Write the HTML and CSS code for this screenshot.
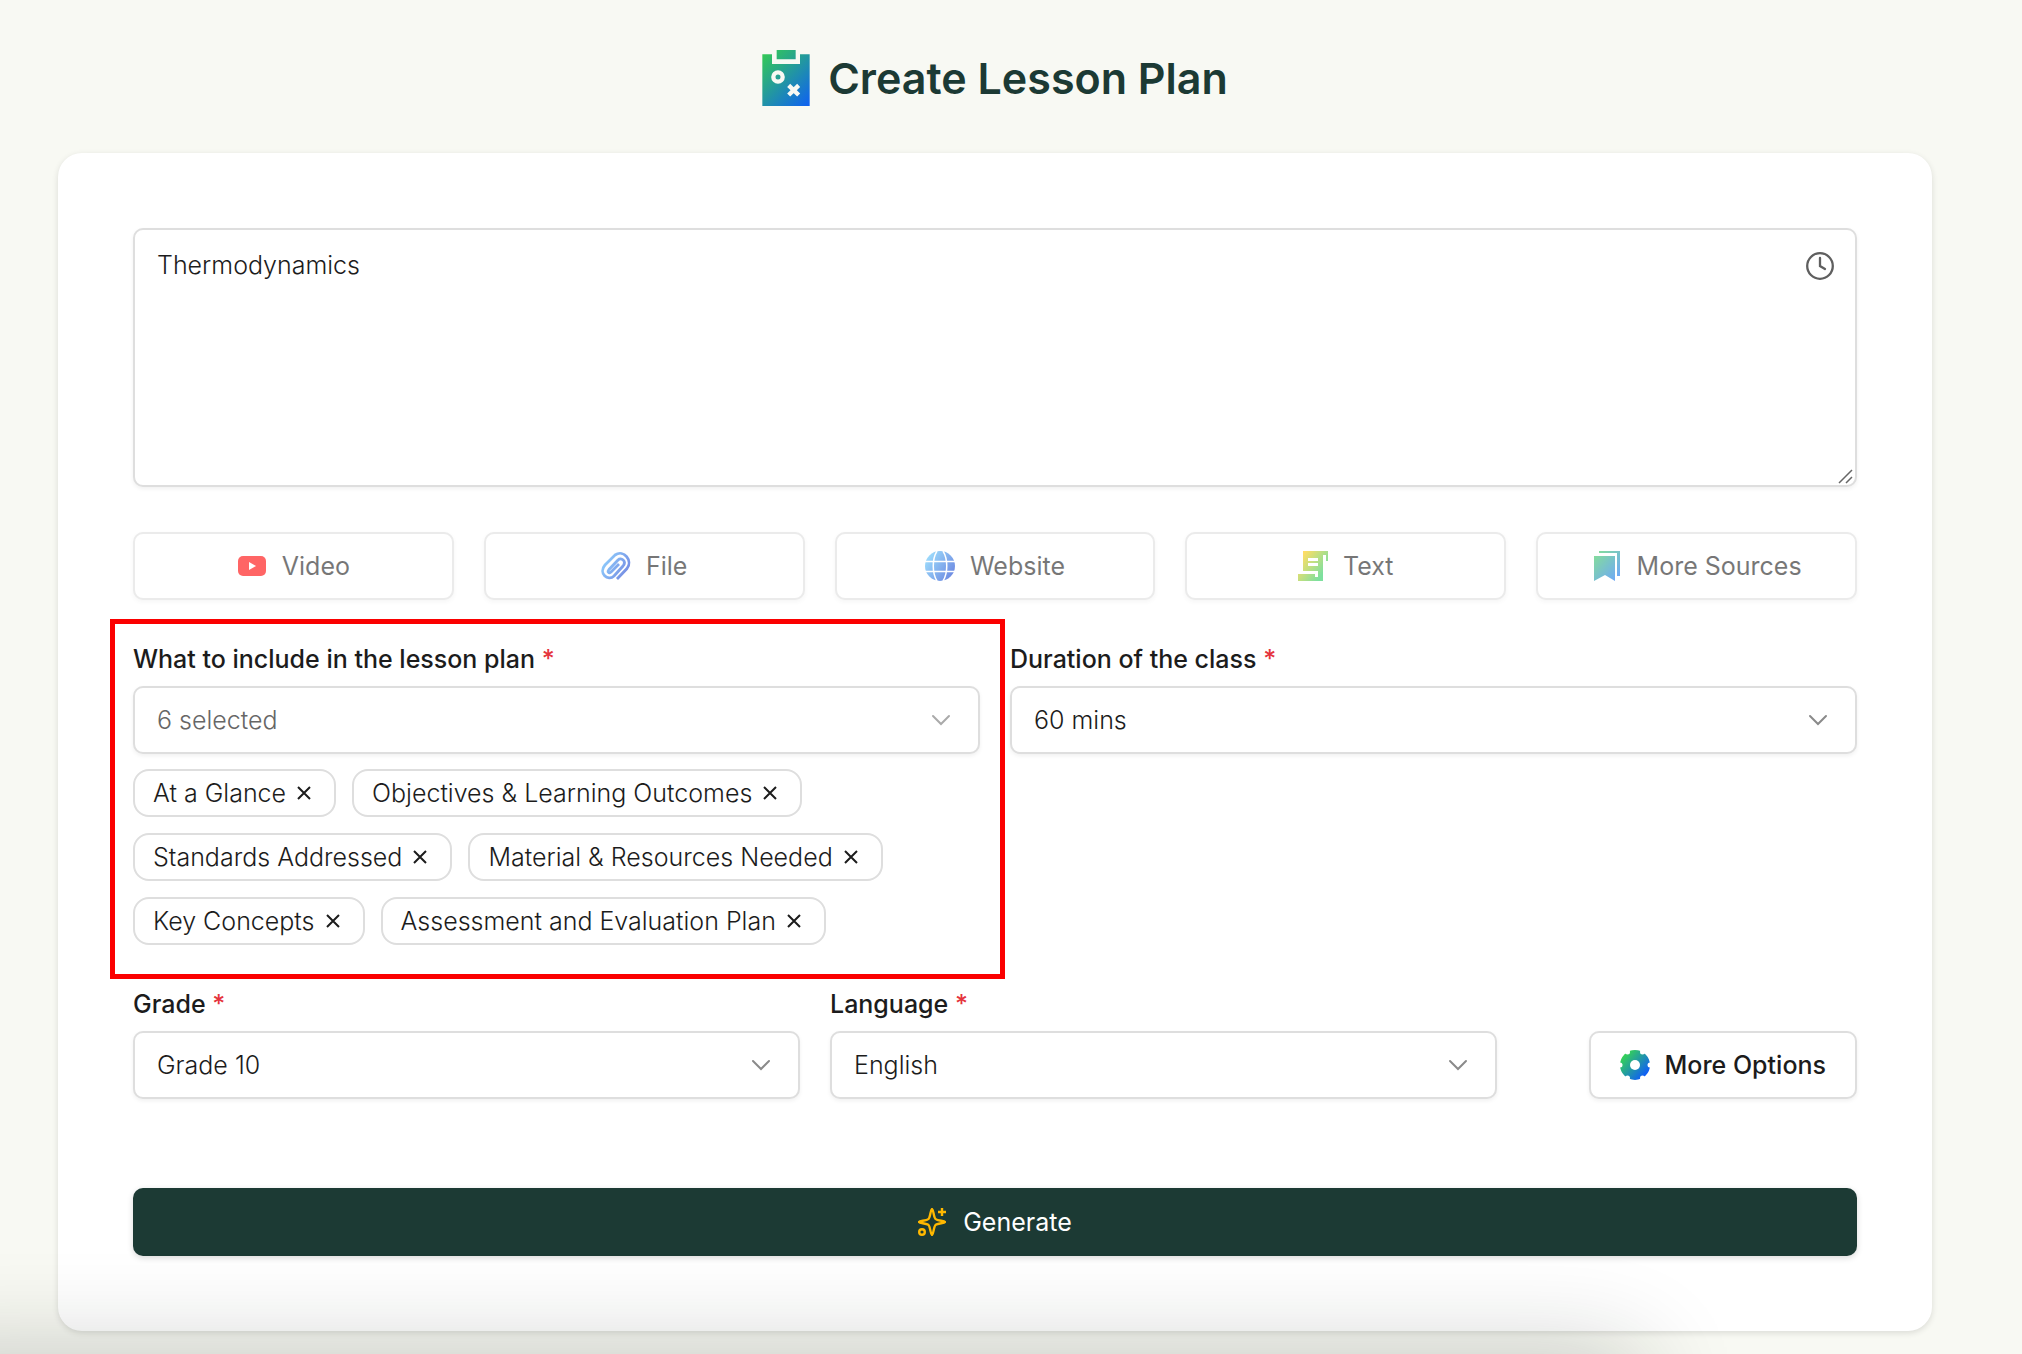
FILE: index.html
```
<!DOCTYPE html>
<html lang="en">
<head>
    <meta charset="UTF-8">
    <meta name="viewport" content="width=device-width, initial-scale=1.0">
    <title>Create Lesson Plan</title>
    <link rel="stylesheet" href="styles.css">
</head>
<body>
    <main class="page">
        <!-- Title -->
        <header class="page-header">
            <svg class="title-icon" viewBox="73 60 142 168" aria-hidden="true">
                <defs>
                    <linearGradient id="gradTitle" x1="73" y1="80" x2="215" y2="222" gradientUnits="userSpaceOnUse">
                        <stop offset="0" stop-color="#34c759"/>
                        <stop offset="1" stop-color="#0f62f0"/>
                    </linearGradient>
                </defs>
                <path fill="url(#gradTitle)" d="M73 73h29v29h84V73h29v155H73zM116 60h57v28h-57z"/>
                <circle cx="120" cy="141" r="14" fill="none" stroke="#f8f9f3" stroke-width="13"/>
                <path d="M152 166l30 29M182 166l-30 29" stroke="#f8f9f3" stroke-width="13"/>
            </svg>
            <h1>Create Lesson Plan</h1>
        </header>

        <form class="card">
            <!-- Topic -->
            <div class="topic">
                <textarea class="topic-input" aria-label="Topic">Thermodynamics</textarea>
                <button type="button" class="history-btn" aria-label="History">
                    <svg viewBox="0 0 28 28" fill="none" stroke="currentColor" stroke-width="2.300" stroke-linecap="round">
                        <circle cx="14" cy="14" r="12.800"/>
                        <path d="M14 6v8l5 3"/>
                    </svg>
                </button>
                <svg class="resize-grip" viewBox="0 0 16 16" aria-hidden="true">
                    <path d="M1 15L14 2M8 15l6-6" stroke="#666" stroke-width="1.500"/>
                </svg>
            </div>

            <!-- Sources -->
            <div class="sources">
                <button type="button" class="btn source-btn">
                    <svg viewBox="0 0 30 30" aria-hidden="true">
                        <rect x="1" y="5" width="28" height="20" rx="5" fill="#ff0000"/>
                        <path d="M12 11v8l7-4z" fill="#fff"/>
                    </svg>
                    Video
                </button>
                <button type="button" class="btn source-btn">
                    <svg viewBox="0 0 30 30" aria-hidden="true">
                        <defs>
                            <linearGradient id="gradFile" x1="0" y1="8" x2="26" y2="24" gradientUnits="userSpaceOnUse">
                                <stop offset="0" stop-color="#47b5ff"/>
                                <stop offset="1" stop-color="#1a3fd0"/>
                            </linearGradient>
                        </defs>
                        <path d="M16 28L26 17.500C32 10 23-2 14 4L4 14C-3 22 7 31 13 25L22 15C26 10 20 6 17 9L8 18.500C6 21 8 23 10 21L18 13" fill="none" stroke="url(#gradFile)" stroke-width="2.800"/>
                    </svg>
                    File
                </button>
                <button type="button" class="btn source-btn">
                    <svg viewBox="0 0 30 30" aria-hidden="true">
                        <defs>
                            <linearGradient id="gradWeb" x1="2" y1="6" x2="28" y2="24" gradientUnits="userSpaceOnUse">
                                <stop offset="0" stop-color="#5cc4fa"/>
                                <stop offset="1" stop-color="#0f3fd0"/>
                            </linearGradient>
                        </defs>
                        <circle cx="15" cy="15" r="15" fill="url(#gradWeb)"/>
                        <path d="M0 10.500h30M0 20.500h30M12 0C7 8 7 22 12 30M18 0c5 8 5 22 0 30" fill="none" stroke="#fff" stroke-width="1.500"/>
                    </svg>
                    Website
                </button>
                <button type="button" class="btn source-btn">
                    <svg viewBox="0 0 30 30" aria-hidden="true">
                        <defs>
                            <linearGradient id="gradText" x1="3" y1="6" x2="25" y2="22" gradientUnits="userSpaceOnUse">
                                <stop offset="0" stop-color="#ffc800"/>
                                <stop offset="1" stop-color="#28cc5f"/>
                            </linearGradient>
                        </defs>
                        <path fill="url(#gradText)" d="M5 0h25v10h-2V4h-3v26H0v-7h17v3h3v-6H5zM10 7v3h10V7zM10 12v3h10v-3z" fill-rule="evenodd"/>
                    </svg>
                    Text
                </button>
                <button type="button" class="btn source-btn">
                    <svg viewBox="0 0 30 30" aria-hidden="true">
                        <defs>
                            <linearGradient id="gradMore" x1="2" y1="4" x2="26" y2="26" gradientUnits="userSpaceOnUse">
                                <stop offset="0" stop-color="#34c759"/>
                                <stop offset="1" stop-color="#0f72f0"/>
                            </linearGradient>
                        </defs>
                        <path fill="url(#gradMore)" d="M2 5h21v25l-10-6-11 6zM7 0h21v25h-3V2H7z"/>
                    </svg>
                    More Sources
                </button>
            </div>

            <!-- Sections and duration -->
            <div class="row row-half">
                <div class="field field-marked">
                    <label for="sections">What to include in the lesson plan <span class="required">*</span></label>
                    <div class="select-wrap">
                        <select id="sections" class="select select-muted">
                            <option>6 selected</option>
                        </select>
                        <svg class="chevron chevron-muted" viewBox="0 0 20 12"><path d="M2 2l8 8 8-8"/></svg>
                    </div>
                    <div class="chips" id="chips"></div>
                </div>
                <div class="field">
                    <label for="duration">Duration of the class <span class="required">*</span></label>
                    <div class="select-wrap">
                        <select id="duration" class="select">
                            <option>60 mins</option>
                        </select>
                        <svg class="chevron" viewBox="0 0 20 12"><path d="M2 2l8 8 8-8"/></svg>
                    </div>
                </div>
            </div>

            <!-- Grade, language, options -->
            <div class="row row-options">
                <div class="field">
                    <label for="grade">Grade <span class="required">*</span></label>
                    <div class="select-wrap">
                        <select id="grade" class="select">
                            <option>Grade 10</option>
                        </select>
                        <svg class="chevron" viewBox="0 0 20 12"><path d="M2 2l8 8 8-8"/></svg>
                    </div>
                </div>
                <div class="field">
                    <label for="language">Language <span class="required">*</span></label>
                    <div class="select-wrap">
                        <select id="language" class="select">
                            <option>English</option>
                        </select>
                        <svg class="chevron" viewBox="0 0 20 12"><path d="M2 2l8 8 8-8"/></svg>
                    </div>
                </div>
                <button type="button" class="btn options-btn">
                    <svg viewBox="0 0 30 30" aria-hidden="true">
                        <defs>
                            <linearGradient id="gradGear" x1="4" y1="6" x2="25" y2="25" gradientUnits="userSpaceOnUse">
                                <stop offset="0" stop-color="#34d058"/>
                                <stop offset="1" stop-color="#0f5ff5"/>
                            </linearGradient>
                        </defs>
                        <circle cx="15" cy="15" r="15" fill="url(#gradGear)"/>
                        <g fill="#fff">
                            <circle cx="15" cy="15" r="5"/>
                            <circle cx="30" cy="15" r="2.500"/>
                            <circle cx="22.500" cy="2" r="2.500"/>
                            <circle cx="7.500" cy="2" r="2.500"/>
                            <circle cx="0" cy="15" r="2.500"/>
                            <circle cx="7.500" cy="28" r="2.500"/>
                            <circle cx="22.500" cy="28" r="2.500"/>
                        </g>
                    </svg>
                    More Options
                </button>
            </div>

            <button type="button" class="generate-btn">
                <svg viewBox="0 0 28 28" fill="none" stroke="#ffb800" stroke-width="2.400" stroke-linejoin="round" aria-hidden="true">
                    <path d="M14 1C15.500 1 15.500 9 17.500 11S27 12.500 27 14 19.500 15 17.500 17 15.500 27 14 27 12.500 19 10.500 17 1 15.500 1 14 8.500 13 10.500 11 12.500 1 14 1z"/>
                    <path d="M24 0v8M20 4h8"/>
                    <circle cx="4" cy="24" r="2.800"/>
                </svg>
                Generate
            </button>
        </form>
    </main>
    <div class="bottom-shade"></div>

    <script>
        const sections = [
            "At a Glance",
            "Objectives & Learning Outcomes",
            "Standards Addressed",
            "Material & Resources Needed",
            "Key Concepts",
            "Assessment and Evaluation Plan"
        ];

        // Build the list of selected sections
        const chips = document.getElementById('chips');
        sections.forEach(name => {
            const chip = document.createElement('span');
            chip.className = 'chip';
            chip.textContent = name;

            const remove = document.createElement('button');
            remove.type = 'button';
            remove.className = 'chip-remove';
            remove.setAttribute('aria-label', 'Remove ' + name);
            remove.innerHTML = '<svg viewBox="0 0 28 28"><path d="M8 8l12 12M20 8L8 20"/></svg>';
            remove.onclick = () => chip.remove();

            chip.appendChild(remove);
            chips.appendChild(chip);
        });
    </script>
</body>
</html>
```
FILE: styles.css
```
* {
    margin: 0;
    padding: 0;
    box-sizing: border-box;
}

body {
    background: #f8f9f3;
    color: #1c1c1c;
    font-family: Inter, "Liberation Sans", sans-serif;
    font-size: 25px;
    line-height: 36px;
}

button,
select,
textarea {
    font: inherit;
    color: inherit;
}

button {
    cursor: pointer;
}

.page {
    padding: 44px 90px 22px 58px;
}

/* Title */
.page-header {
    display: flex;
    justify-content: center;
    align-items: center;
    gap: 18px;
    margin-bottom: 41px;
}

.title-icon {
    width: 48px;
    height: 56px;
}

h1 {
    color: #1c3a34;
    font-size: 43px;
    font-weight: 600;
    line-height: 68px;
}

/* Card */
.card {
    display: flex;
    flex-direction: column;
    padding: 75px;
    background: #fff;
    border-radius: 24px;
    box-shadow: 0 2px 6px rgba(0, 0, 0, 0.12);
}

/* Topic */
.topic {
    position: relative;
    display: flex;
    margin-bottom: 45px;
}

.topic-input {
    width: 100%;
    height: 259px;
    padding: 17px 80px 17px 22px;
    font-weight: 300;
    background: #fff;
    border: 2px solid #dedede;
    border-radius: 10px;
    box-shadow: 0 2px 4px rgba(0, 0, 0, 0.06);
    outline: none;
}

.topic-input::-webkit-resizer {
    display: none;
}

.history-btn {
    position: absolute;
    top: 24px;
    right: 23px;
    width: 28px;
    height: 28px;
    color: #5f5f5f;
    background: none;
    border: none;
}

.history-btn svg {
    display: block;
}

.resize-grip {
    position: absolute;
    right: 3px;
    bottom: 3px;
    width: 16px;
    height: 16px;
    pointer-events: none;
}

/* Buttons */
.btn {
    display: flex;
    justify-content: center;
    align-items: center;
    gap: 15px;
    height: 68px;
    background: #fff;
    border: 2px solid #dedede;
    border-radius: 10px;
    box-shadow: 0 2px 4px rgba(0, 0, 0, 0.06);
}

.btn svg {
    width: 30px;
    height: 30px;
}

.sources {
    display: grid;
    grid-template-columns: repeat(5, 1fr);
    gap: 30px;
    margin-bottom: 41px;
}

.source-btn {
    opacity: 0.6;
}

.options-btn {
    align-self: end;
    justify-self: end;
    padding: 0 29px;
    font-weight: 500;
}

/* Fields */
.row {
    display: grid;
    gap: 30px;
}

.row-half {
    grid-template-columns: repeat(2, 1fr);
    margin-bottom: 41px;
}

.row-options {
    grid-template-columns: 1fr 1fr 330px;
    margin-bottom: 89px;
}

.field label {
    display: block;
    margin-bottom: 9px;
    font-weight: 500;
}

.required {
    color: #e5343d;
}

/* Red frame round the marked field */
.field-marked {
    position: relative;
}

.field-marked::after {
    content: "";
    position: absolute;
    inset: -22px -25px -34px -23px;
    border: 5px solid #fb0000;
    pointer-events: none;
}

.select-wrap {
    position: relative;
}

.select {
    display: block;
    width: 100%;
    height: 68px;
    padding: 0 70px 0 22px;
    font-weight: 300;
    background: #fff;
    border: 2px solid #dedede;
    border-radius: 10px;
    box-shadow: 0 2px 4px rgba(0, 0, 0, 0.06);
    appearance: none;
}

.select-muted {
    color: #666;
}

.chevron {
    position: absolute;
    top: 28px;
    right: 29px;
    width: 20px;
    height: 12px;
    fill: none;
    stroke: #8a8a8a;
    stroke-width: 2;
    stroke-linecap: round;
    pointer-events: none;
}

.chevron-muted {
    stroke: #aaa;
}

/* Chips */
.chips {
    display: flex;
    flex-wrap: wrap;
    gap: 16px;
    margin-top: 15px;
}

.chip {
    display: flex;
    align-items: center;
    gap: 4px;
    height: 48px;
    padding: 0 16px 0 18px;
    font-weight: 300;
    border: 2px solid #dedede;
    border-radius: 16px;
}

.chip-remove {
    width: 28px;
    height: 28px;
    background: none;
    border: none;
}

.chip-remove svg {
    display: block;
    stroke: #1c1c1c;
    stroke-width: 2;
}

/* Generate */
.generate-btn {
    display: flex;
    justify-content: center;
    align-items: center;
    gap: 17px;
    height: 68px;
    color: #fff;
    background: #1c3a34;
    border: none;
    border-radius: 10px;
    box-shadow: 0 2px 6px rgba(0, 0, 0, 0.15);
}

.generate-btn svg {
    width: 28px;
    height: 28px;
}

/* Shade along the bottom of the window */
.bottom-shade {
    position: fixed;
    top: 100%;
    left: -100px;
    right: 19%;
    height: 100px;
    box-shadow: 0 0 100px rgba(20, 30, 20, 0.24);
    pointer-events: none;
}
```
